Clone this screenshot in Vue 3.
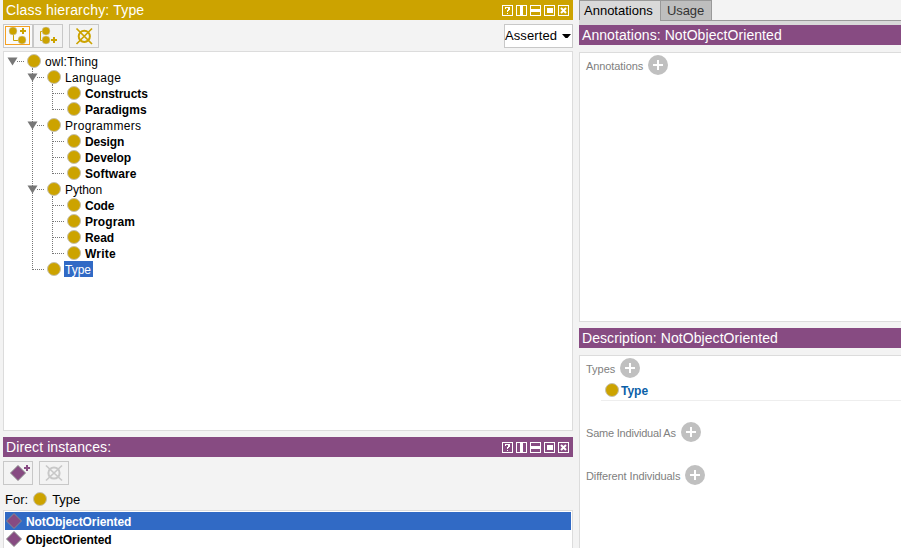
<script setup>
const tree = [
  { name: 'owl:Thing', depth: 0, open: true, track: 0.2 },
  { name: 'Language', depth: 1, open: true, track: 0.37 },
  { name: 'Constructs', depth: 2, track: -0.05 },
  { name: 'Paradigms', depth: 2, last: true, track: 0.03 },
  { name: 'Programmers', depth: 1, open: true, track: 0.34 },
  { name: 'Design', depth: 2, track: -0.15 },
  { name: 'Develop', depth: 2, track: -0.1 },
  { name: 'Software', depth: 2, last: true, track: 0.12 },
  { name: 'Python', depth: 1, open: true, track: -0.05 },
  { name: 'Code', depth: 2, track: -0.2 },
  { name: 'Program', depth: 2, track: 0.1 },
  { name: 'Read', depth: 2, track: -0.1 },
  { name: 'Write', depth: 2, last: true, track: 0.25 },
  { name: 'Type', depth: 1, last: true, selected: true, track: 0 },
]

// Dotted connector segments of one row, in the row's own 16px-high box.
function guides(n) {
  const x = n.depth * 20
  let d = n.open ? `M${x + 13} 8.5H${x + 21}` : `M${x + 9} 8.5H${x + 21}`
  if (n.open) d += `M${x + 28.5} 15V16`
  if (n.depth === 2) d += `M28.5 0V16M48.5 0V${n.last ? 9 : 16}`
  if (n.depth === 1) d += n.last ? 'M28.5 0V9' : 'M28.5 0V16'
  return d
}

const instances = [
  { name: 'NotObjectOriented', selected: true },
  { name: 'ObjectOriented' },
]
const winIcons = ['help', 'columns', 'rows', 'float', 'close']
</script>

<template>
  <div class="app">
    <div class="left">
      <header class="bar gold">
        <span class="t-class">Class hierarchy: Type</span>
        <div class="win">
          <svg v-for="k in winIcons" :key="k" width="11" height="11" viewBox="0 0 11 11">
            <rect x=".5" y=".5" width="10" height="10" class="wline" />
            <path v-if="k === 'help'" d="M3 2.5H7M7 2V5M6 3V5M5 5.5H7M5 6.5H6M5 8.5H6M3 3.5H4" class="wq" />
            <rect v-else-if="k === 'columns'" x="4" y="0" width="3" height="11" fill="#fff" />
            <rect v-else-if="k === 'rows'" x="0" y="4" width="11" height="3" fill="#fff" />
            <rect v-else-if="k === 'float'" x="3" y="3" width="6" height="5" fill="#fff" />
            <path v-else d="M3 3L8 8M8 3L3 8" class="wx" />
          </svg>
        </div>
      </header>
      <div class="tools">
        <button class="btn focus">
          <svg width="28" height="22" viewBox="0 0 28 22">
            <path d="M9.5 9V15.5H15" class="gl" />
            <circle cx="9" cy="6" r="4" class="gd" />
            <circle cx="18" cy="15" r="4" class="gd" />
            <path d="M16 6H22M19 3V9" class="gp" />
            <rect x="1.5" y="1.5" width="24" height="18" fill="none" stroke="#f5a021" />
          </svg>
        </button>
        <button class="btn">
          <svg width="28" height="22" viewBox="0 0 28 22">
            <path d="M12 6.5H6.5V15.5H10" class="gl" />
            <circle cx="12" cy="6" r="4" class="gd" />
            <circle cx="12" cy="15" r="4" class="gd" />
            <path d="M17 15H23M20 12V18" class="gp" />
          </svg>
        </button>
        <button class="btn del">
          <svg width="28" height="22" viewBox="0 0 28 22">
            <circle cx="14.3" cy="11.3" r="5.6" fill="none" stroke="#cca300" stroke-width="2" />
            <path d="M6.5 3.5L22 19M22 3.5L6.5 19" stroke="#cca300" stroke-width="1.7" />
          </svg>
        </button>
        <div class="select">
          <span>Asserted</span>
          <svg width="9" height="4" viewBox="0 0 9 4"><path d="M0 0H9L5.5 4H3.5Z" fill="#000" /></svg>
        </div>
      </div>
      <div class="panel tree">
        <div v-for="n in tree" :key="n.name" class="node">
          <svg :width="n.depth * 20 + 39" height="16" class="rail">
            <path :d="guides(n)" class="dots" />
            <path v-if="n.open" :d="`M${n.depth * 20 + 3.5} 4.5h10l-5 8z`" fill="#777" />
            <circle :cx="n.depth * 20 + 30" cy="8" r="6.5" class="dot" />
          </svg>
          <span class="label" :class="{ bold: n.depth === 2, sel: n.selected }" :style="{ letterSpacing: n.track + 'px' }">{{ n.name }}</span>
        </div>
      </div>
      <header class="bar plum second">
        <span class="t-direct">Direct instances:</span>
        <div class="win">
          <svg v-for="k in winIcons" :key="k" width="11" height="11" viewBox="0 0 11 11">
            <rect x=".5" y=".5" width="10" height="10" class="wline" />
            <path v-if="k === 'help'" d="M3 2.5H7M7 2V5M6 3V5M5 5.5H7M5 6.5H6M5 8.5H6M3 3.5H4" class="wq" />
            <rect v-else-if="k === 'columns'" x="4" y="0" width="3" height="11" fill="#fff" />
            <rect v-else-if="k === 'rows'" x="0" y="4" width="11" height="3" fill="#fff" />
            <rect v-else-if="k === 'float'" x="3" y="3" width="6" height="5" fill="#fff" />
            <path v-else d="M3 3L8 8M8 3L3 8" class="wx" />
          </svg>
        </div>
      </header>
      <div class="tools">
        <button class="btn">
          <svg width="28" height="22" viewBox="0 0 28 22">
            <path d="M14 3.5L21.5 11L14 18.5L6.5 11Z" class="dia" />
            <path d="M20 6H26M23 3V9" stroke="#874b82" stroke-width="2" />
          </svg>
        </button>
        <button class="btn off">
          <svg width="28" height="22" viewBox="0 0 28 22">
            <circle cx="14" cy="11" r="5.6" fill="none" stroke="#c8c8c8" stroke-width="2" />
            <path d="M6 3.5L22 18.5M22 3.5L6 18.5" stroke="#c8c8c8" stroke-width="1.7" />
          </svg>
        </button>
      </div>
      <div class="for">
        <span>For:</span>
        <svg width="16" height="16"><circle cx="8" cy="8" r="6.5" class="dot" /></svg>
        <span>Type</span>
      </div>
      <div class="panel list">
        <div v-for="i in instances" :key="i.name" class="inst" :class="{ on: i.selected }">
          <svg width="18" height="18"><path d="M9 1.5L16.5 9L9 16.5L1.5 9Z" class="dia" /></svg>
          <span>{{ i.name }}</span>
        </div>
      </div>
    </div>

    <div class="right">
      <nav class="tabs">
        <div class="tab cur">Annotations</div>
        <div class="tab">Usage</div>
      </nav>
      <div class="strip"><i></i></div>
      <header class="bar plum"><span class="t-ind">Annotations: NotObjectOriented</span></header>
      <section class="panel ann">
        <div class="row">
          <span class="s-ann">Annotations</span>
          <svg width="20" height="20" class="add"><circle cx="10" cy="10" r="10" /><path d="M5 10H15M10 5V15" /></svg>
        </div>
      </section>
      <header class="bar plum desc"><span class="t-ind">Description: NotObjectOriented</span></header>
      <section class="panel dsc">
        <div class="row">
          <span>Types</span>
          <svg width="20" height="20" class="add"><circle cx="10" cy="10" r="10" /><path d="M5 10H15M10 5V15" /></svg>
        </div>
        <div class="value">
          <svg width="16" height="16"><circle cx="8" cy="8" r="6.5" class="dot" /></svg>
          <span>Type</span>
        </div>
        <div class="row same">
          <span class="s-same">Same Individual As</span>
          <svg width="20" height="20" class="add"><circle cx="10" cy="10" r="10" /><path d="M5 10H15M10 5V15" /></svg>
        </div>
        <div class="row diff">
          <span class="s-diff">Different Individuals</span>
          <svg width="20" height="20" class="add"><circle cx="10" cy="10" r="10" /><path d="M5 10H15M10 5V15" /></svg>
        </div>
      </section>
    </div>
  </div>
</template>

<style>
body { margin: 0; overflow: hidden; }
</style>

<style scoped>
.app {
  display: flex;
  gap: 6px;
  width: 901px;
  height: 548px;
  padding-left: 3px;
  box-sizing: border-box;
  overflow: hidden;
  background: #f3f3f3;
  color: #000;
  font: 12px "Liberation Sans", Arial, sans-serif;
  white-space: nowrap;
}
svg { display: block; flex: none; }
.left { width: 570px; flex: none; display: flex; flex-direction: column; }
.right { flex: 1; min-width: 0; display: flex; flex-direction: column; }
.bar {
  height: 20px;
  flex: none;
  display: flex;
  align-items: center;
  justify-content: space-between;
  padding: 0 4px 0 3px;
  box-sizing: border-box;
  color: #fff;
  font-size: 14px;
  line-height: 20px;
}
.t-class { letter-spacing: .19px; }
.t-direct { letter-spacing: .1px; }
.t-ind { letter-spacing: .07px; }
.gold { background: #cca300; }
.plum { background: #874b82; }
.second { margin-top: 6px; }
.win { display: flex; gap: 3px; padding-top: 1px; }
.wline { fill: none; stroke: #fff; }
.wq { fill: none; stroke: #fff; shape-rendering: crispEdges; }
.wx { stroke: #fff; stroke-width: 2; }
.tools { display: flex; margin-top: 4px; height: 24px; flex: none; }
.btn {
  width: 30px;
  height: 24px;
  padding: 0;
  border: 1px solid #c8c8c8;
  border-radius: 0;
  background: #f3f3f3;
  box-sizing: border-box;
}
.focus { background: #fafafa; }
.del, .off { margin-left: 6px; }
.gl { fill: none; stroke: #cca300; }
.gd { fill: #cca300; stroke: #ccc; stroke-width: .5; }
.gp { stroke: #cca300; stroke-width: 2; }
.select {
  margin-left: auto;
  width: 69px;
  height: 24px;
  box-sizing: border-box;
  border: 1px solid #c8c8c8;
  background: #fff;
  display: flex;
  align-items: center;
  justify-content: space-between;
  padding-right: 1px;
  font-size: 13px;
  line-height: 22px;
  letter-spacing: .1px;
}
.panel { background: #fff; border: 1px solid #dcdcdc; box-sizing: border-box; }
.tree { margin-top: 3px; height: 380px; padding-top: 1px; flex: none; }
.node { display: flex; height: 16px; }
.label { margin-left: 1px; padding: 1px 2px 0 1px; line-height: 17px; height: 15px; }
.bold { font-weight: bold; }
.sel { background: #316ac5; color: #fff; }
.dots { fill: none; stroke: #777; stroke-dasharray: 1 1; shape-rendering: crispEdges; }
.dot { fill: #cca300; stroke: #c6c1ae; }
.dia { fill: #874b82; stroke: #8a8a8a; }
.for { display: flex; align-items: center; height: 25px; padding: 2px 0 0 2px; box-sizing: border-box; font-size: 13px; gap: 4px; flex: none; }
.for span { line-height: 17px; padding-top: 2px; }
.list { height: 60px; padding: 1px; flex: none; }
.inst { display: flex; align-items: center; height: 18px; gap: 3px; font-weight: bold; letter-spacing: -.08px; }
.inst span { padding-top: 1px; }
.on { background: #316ac5; color: #fff; }
.tabs { display: flex; height: 20px; flex: none; }
.tab {
  box-sizing: border-box;
  width: 51px;
  padding-left: 6px;
  border: 1px solid #999;
  border-width: 1px 1px 0 0;
  background: #bebebe;
  color: #333;
  font-size: 13px;
  line-height: 19px;
  letter-spacing: -.1px;
}
.cur { width: 82px; background: #d9d9d9; color: #000; border-left-width: 1px; padding-left: 4px; letter-spacing: 0; }
.strip { display: flex; height: 5px; background: #d9d9d9; flex: none; }
.strip i { height: 1px; flex: 1; margin-left: 81px; background: #999; }
.ann { margin-top: 7px; height: 270px; padding: 2px 0 0 6px; border-right: 0; flex: none; }
.desc { margin-top: 6px; }
.dsc { margin-top: 7px; height: 220px; padding: 2px 0 0 6px; border-right: 0; flex: none; }
.row { display: flex; align-items: center; height: 20px; gap: 5px; color: #808080; font-size: 11px; }
.row span { padding-top: 2px; }
.s-ann { letter-spacing: -.09px; }
.s-same { letter-spacing: -.21px; }
.s-diff { letter-spacing: -.1px; }
.add circle { fill: #c0c0c0; }
.add path { stroke: #fff; stroke-width: 2; }
.value {
  display: flex;
  align-items: center;
  height: 23px;
  margin-left: 15px;
  gap: 1px;
  padding: 1px 0 0 3px;
  border-bottom: 1px solid #eee;
  box-sizing: border-box;
  color: #0b5fa8;
  font-weight: bold;
}
.value span { padding-top: 2px; }
.same { margin-top: 21px; }
.diff { margin-top: 23px; }
</style>
